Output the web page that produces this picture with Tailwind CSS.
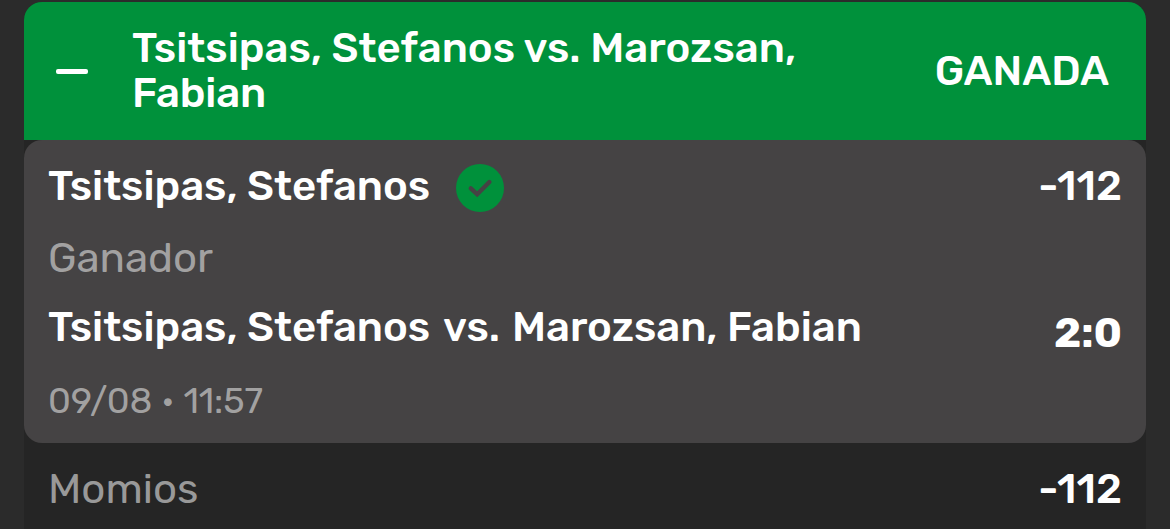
<!DOCTYPE html>
<html lang="es"><head><meta charset="utf-8"><title>Tsitsipas, Stefanos vs. Marozsan, Fabian</title><script src="https://cdn.jsdelivr.net/npm/@tailwindcss/browser@4"></script></head>
<body class="w-[1170px] h-[529px] overflow-hidden bg-[#2b2b2b] px-6 pt-[2px] font-['Rubik','Roboto',sans-serif] font-medium text-white text-[42px]">
<main class="h-[527px] bg-[#252525] rounded-t-[18px] whitespace-nowrap">
<header class="h-[138px] rounded-t-[18px] bg-[#00913b] flex items-center pl-8 pr-[37px]">
<span class="w-8 h-[5px] rounded-[2px] bg-white mr-11"></span>
<h1 class="w-[700px] leading-[45px] whitespace-normal grow">Tsitsipas, Stefanos vs. Marozsan, <span class="tracking-[-0.2px]">Fabian</span></h1>
<span class="leading-[45px] tracking-[-0.1px]">GANADA</span>
</header>
<section class="h-[303px] rounded-[18px] bg-[#454344] pl-6 pr-6 pt-[19px] leading-[54px]">
<div class="flex h-[54px] justify-between"><div class="flex gap-[26px]"><span class="tracking-[-0.05px]">Tsitsipas, Stefanos</span><svg class="size-12 mt-[5px]" viewBox="0 0 48 48"><circle cx="24" cy="24" r="24" fill="#00913b"/><path d="M14.8 24.3l6.4 6L33.4 18" fill="none" stroke="#454344" stroke-width="4.4" stroke-linecap="round"/></svg></div><span>-112</span></div>
<div class="mt-[18px] h-[54px] font-normal text-[#a2a1a1] tracking-[-0.1px]">Ganador</div>
<div class="mt-[15px] flex h-[54px] justify-between"><div class="flex tracking-[-0.05px]"><span class="mr-[13px]">Tsitsipas, Stefanos</span><span class="mr-[12px]">vs.</span><span>Marozsan, Fabian</span></div><span class="mt-[6px] font-bold">2:0</span></div>
<div class="mt-5 h-[54px] font-normal text-[36px] text-[#a2a1a1] tracking-[-0.08px]">09/08 • 11:57</div>
</section>
<footer class="flex justify-between pl-6 pr-6 pt-[19px] leading-[54px]"><span class="font-normal text-[#999999]">Momios</span><span>-112</span></footer>
</main></body></html>
